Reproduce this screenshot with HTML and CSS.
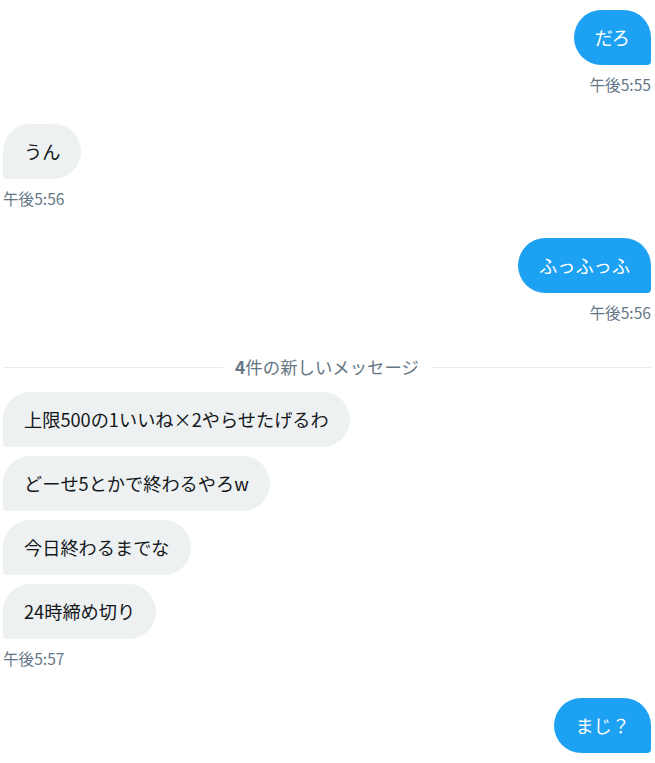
FILE: index.html
```html
<!DOCTYPE html>
<html lang="ja">
<head>
    <meta charset="UTF-8">
    <title>メッセージ</title>
    <link rel="stylesheet" href="styles.css">
</head>
<body>
    <div class="thread">
        <div class="group sent">
            <div class="bubble">だろ</div>
            <div class="time">午後5:55</div>
        </div>

        <div class="group received">
            <div class="bubble">うん</div>
            <div class="time">午後5:56</div>
        </div>

        <div class="group sent">
            <div class="bubble">ふっふっふ</div>
            <div class="time">午後5:56</div>
        </div>

        <div class="divider"><span><b>4</b>件の新しいメッセージ</span></div>

        <div class="group received">
            <div class="bubble">上限500の1いいね×2やらせたげるわ</div>
            <div class="bubble">どーせ5とかで終わるやろw</div>
            <div class="bubble">今日終わるまでな</div>
            <div class="bubble">24時締め切り</div>
            <div class="time">午後5:57</div>
        </div>

        <div class="group sent">
            <div class="bubble">まじ？</div>
        </div>
    </div>
</body>
</html>
```

FILE: styles.css
```css
body {
    margin: 0;
    font-family: "Noto Sans CJK JP", "Noto Sans", sans-serif;
    color: #14171a;
    background: #fff;
}
.thread {
    display: flex;
    flex-direction: column;
    padding: 10px 4px 0 3px;
}
.group {
    display: flex;
    flex-direction: column;
    gap: 9px;
    margin-bottom: 30px;
}
.group.sent {
    align-items: flex-end;
}
.group.received {
    align-items: flex-start;
}
.bubble {
    font-size: 18.2px;
    line-height: 23px;
    padding: 16px 21px;
    border-radius: 28px;
}
.sent .bubble {
    background: #1da1f2;
    color: #fff;
    border-bottom-right-radius: 4px;
}
.received .bubble {
    background: #edf1f2;
    color: #14171a;
    border-bottom-left-radius: 4px;
}
.time {
    font-size: 15.6px;
    line-height: 20px;
    color: #657786;
}

/* 新着メッセージの区切り */
.divider {
    display: flex;
    align-items: center;
    gap: 12px;
    margin: 3px 0 13px;
    font-size: 17.4px;
    line-height: 24px;
    color: #657786;
}
.divider::before,
.divider::after {
    content: "";
    flex: 1;
    height: 1px;
    background: #e6ecf0;
}
.divider b {
    font-weight: 700;
}
```
